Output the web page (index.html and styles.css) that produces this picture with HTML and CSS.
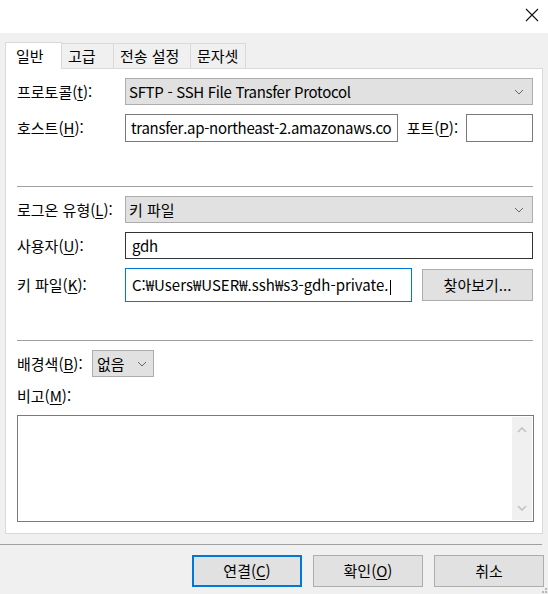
FILE: index.html
```html
<!DOCTYPE html>
<html lang="ko">
<head>
<meta charset="utf-8">
<link rel="stylesheet" href="styles.css">
</head>
<body>
<div class="window">
  <div class="titlebar">
    <svg class="close" width="14" height="14" viewBox="0 0 14 14"><path d="M1 1 L13 13 M13 1 L1 13" stroke="#111" stroke-width="1.1" fill="none"/></svg>
  </div>
  <div class="tabs">
    <div class="tab active">일반</div>
    <div class="tab">고급</div>
    <div class="tab">전송 설정</div>
    <div class="tab">문자셋</div>
  </div>
  <div class="panel">
    <div class="row r1">
      <span class="lbl">프로토콜(<u>t</u>):</span>
      <div class="select grow"><span class="lat">SFTP - SSH File Transfer Protocol</span><svg class="chev" width="10" height="6" viewBox="0 0 10 6"><polyline points="1,1 5,5 9,1" fill="none" stroke="#666" stroke-width="1"/></svg></div>
    </div>
    <div class="row r2">
      <span class="lbl">호스트(<u>H</u>):</span>
      <div class="input host"><span class="clip lat">transfer.ap-northeast-2.amazonaws.com</span></div>
      <span class="lbl port-lbl">포트(<u>P</u>):</span>
      <div class="input port"></div>
    </div>
    <div class="sep s1"></div>
    <div class="row r3">
      <span class="lbl">로그온 유형(<u>L</u>):</span>
      <div class="select grow"><span>키 파일</span><svg class="chev" width="10" height="6" viewBox="0 0 10 6"><polyline points="1,1 5,5 9,1" fill="none" stroke="#666" stroke-width="1"/></svg></div>
    </div>
    <div class="row r4">
      <span class="lbl">사용자(<u>U</u>):</span>
      <div class="input user grow"><span class="lat">gdh</span></div>
    </div>
    <div class="row r5">
      <span class="lbl">키 파일(<u>K</u>):</span>
      <div class="input key"><span class="clip">C:₩Users₩USER₩.ssh₩s3-gdh-private.</span><span class="caret"></span></div>
      <div class="btn browse">찾아보기...</div>
    </div>
    <div class="sep s2"></div>
    <div class="row r6">
      <span class="lbl short">배경색(<u>B</u>):</span>
      <div class="select small"><span>없음</span><svg class="chev" width="10" height="6" viewBox="0 0 10 6"><polyline points="1,1 5,5 9,1" fill="none" stroke="#666" stroke-width="1"/></svg></div>
    </div>
    <div class="row r7">
      <span class="lbl">비고(<u>M</u>):</span>
    </div>
    <div class="textarea">
      <div class="area"></div>
      <div class="scroll">
        <svg width="10" height="6" viewBox="0 0 10 6"><polyline points="1,5 5,1 9,5" fill="none" stroke="#c2c2c2" stroke-width="1.6"/></svg>
        <svg width="10" height="6" viewBox="0 0 10 6"><polyline points="1,1 5,5 9,1" fill="none" stroke="#c2c2c2" stroke-width="1.6"/></svg>
      </div>
    </div>
  </div>
  <div class="footline"></div>
  <div class="buttons">
    <div class="btn dlg default">연결(<u>C</u>)</div>
    <div class="btn dlg">확인(<u>O</u>)</div>
    <div class="btn dlg">취소</div>
  </div>
  <div class="grip">
    <i></i><i></i><i></i>
  </div>
</div>
</body>
</html>
```

FILE: styles.css
```css
* { box-sizing: border-box; }
html, body { margin: 0; padding: 0; }
body {
  width: 548px;
  height: 594px;
  background: #f0f0f0;
  font-family: "Noto Sans CJK KR", "Noto Sans", sans-serif;
  font-size: 15px;
  color: #000;
  overflow: hidden;
}
.window { position: relative; width: 548px; height: 594px; }
u { text-decoration: underline; text-underline-offset: 2px; text-decoration-thickness: 1px; }
.lat { letter-spacing: -0.3px; }

.titlebar {
  height: 33px;
  background: #fff;
  display: flex;
  justify-content: flex-end;
  align-items: flex-start;
  padding: 8px 9px 0 0;
}
.close { display: block; }

.tabs {
  display: flex;
  align-items: flex-end;
  padding: 9px 0 0 5px;
  height: 36px;
  position: relative;
  z-index: 2;
}
.tab {
  height: 25px;
  border: 1px solid #d9d9d9;
  border-bottom: none;
  border-left: none;
  background: #f0f0f0;
  display: flex;
  align-items: center;
  padding: 0 0 0 6px;
  line-height: 20px;
  margin-bottom: 1px;
  white-space: nowrap;
  flex: none;
}
.tab:nth-child(2) { width: 52px; }
.tab:nth-child(3) { width: 77px; }
.tab:nth-child(4) { width: 55px; }
.tab.active {
  width: 57px;
  height: 27px;
  background: #fff;
  border-left: 1px solid #d9d9d9;
  margin-bottom: 0;
  padding-left: 10px;
}

.panel {
  margin-left: 5px;
  margin-top: -1px;
  width: 538px;
  height: 466px;
  background: #fff;
  border: 1px solid #d9d9d9;
  padding: 9px 9px 0 11px;
  display: flex;
  flex-direction: column;
}
.row { display: flex; align-items: center; }
.lbl { width: 108px; flex: none; line-height: 20px; white-space: nowrap; }
.lbl.short { width: 75px; }
.grow { flex: 1; }

.select {
  height: 27px;
  background: #e1e1e1;
  border: 1px solid #adadad;
  display: flex;
  align-items: center;
  justify-content: space-between;
  padding: 0 8px 0 3px;
  line-height: 20px;
}
.select.small { width: 62px; flex: none; padding-left: 4px; padding-right: 6px; }
.chev { display: block; }

.input {
  height: 28px;
  border: 1px solid #7a7a7a;
  background: #fff;
  display: flex;
  align-items: center;
  padding: 0 5px;
  line-height: 20px;
  overflow: hidden;
  white-space: nowrap;
}
.clip { overflow: hidden; white-space: nowrap; min-width: 0; flex: 0 1 auto; }
.host { width: 273px; }
.port-lbl { width: auto; margin-left: 9px; margin-right: 8px; }
.port { width: 67px; }
.user { height: 27px; border-color: #333; padding-left: 6px; }
.key { width: 287px; height: 34px; border-color: #0078d7; padding-left: 6px; }
.caret { display: inline-block; flex: none; width: 1px; height: 15px; background: #000; margin-left: 1px; margin-top: 4px; }

.r2 { margin-top: 9px; }
.sep { height: 1px; background: #a0a0a0; width: 516px; flex: none; }
.s1 { margin-top: 44px; }
.r3 { margin-top: 9px; }
.r4 { margin-top: 9px; }
.r5 { margin-top: 9px; }
.s2 { margin-top: 38px; }
.r6 { margin-top: 9px; }
.r7 { margin-top: 9px; height: 20px; }

.btn {
  background: #e1e1e1;
  border: 1px solid #adadad;
  display: flex;
  align-items: center;
  justify-content: center;
  line-height: 20px;
  white-space: nowrap;
}
.browse { width: 111px; height: 32px; margin-left: 10px; }

.textarea {
  margin-top: 9px;
  width: 517px;
  height: 107px;
  border: 1px solid #7a7a7a;
  display: flex;
}
.area { flex: 1; }
.scroll {
  width: 20px;
  margin: 1px 1px 1px 0;
  background: #f0f0f0;
  display: flex;
  flex-direction: column;
  justify-content: space-between;
  align-items: center;
  padding: 10px 0 9px;
}
.scroll svg { display: block; }

.footline { margin-top: 10px; height: 1px; width: 542px; background: #a0a0a0; }

.buttons {
  display: flex;
  justify-content: flex-end;
  gap: 11px;
  padding: 10px 4px 0 0;
}
.dlg { width: 110px; height: 32px; }
.dlg.default { border: 2px solid #0078d7; }

.grip {
  position: absolute;
  right: 1px;
  bottom: 1px;
  width: 6px;
  height: 6px;
}
.grip i { position: absolute; width: 2px; height: 2px; background: #b8b8b8; }
.grip i:nth-child(1) { right: 0; bottom: 0; }
.grip i:nth-child(2) { right: 3px; bottom: 0; }
.grip i:nth-child(3) { right: 0; bottom: 3px; }
```
